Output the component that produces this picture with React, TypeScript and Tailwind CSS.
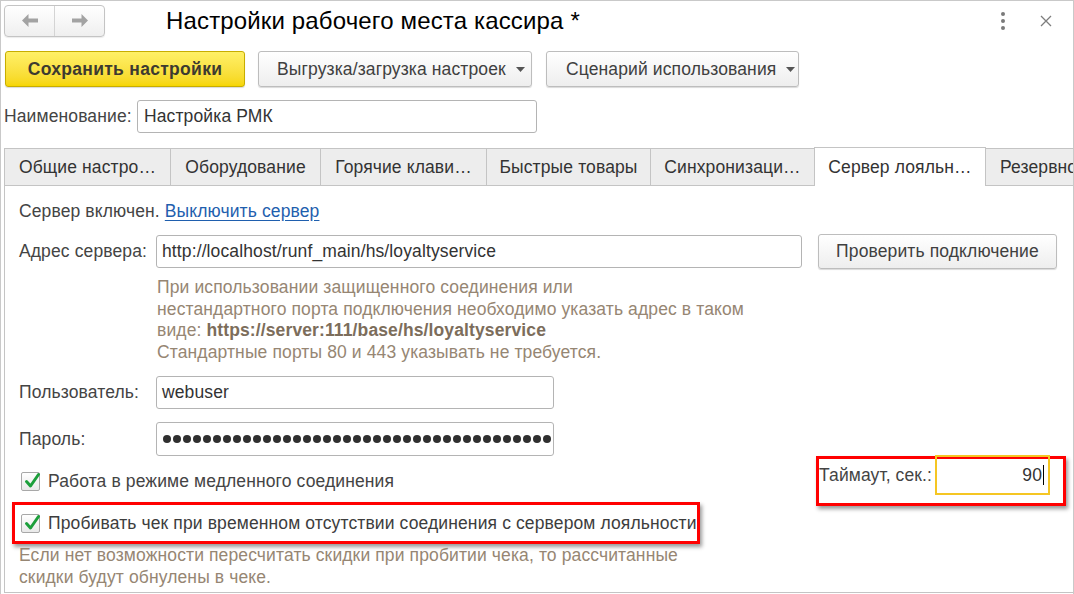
import React from 'react';

const tabs = [
  { label: 'Общие настро…', w: 'w-[167px]' },
  { label: 'Оборудование', w: 'w-[151px]' },
  { label: 'Горячие клави…', w: 'w-[167px]' },
  { label: 'Быстрые товары', w: 'w-[165px]' },
  { label: 'Синхронизаци…', w: 'w-[165px]' },
  { label: 'Сервер лояльн…', w: 'w-[172px]', active: true },
  { label: 'Резервное копирование', w: 'w-[140px]' },
];

const Caret = () => (
  <svg width="9" height="5" viewBox="0 0 9 5" className="shrink-0">
    <polygon points="0,0 9,0 4.5,5" fill="#555" />
  </svg>
);

const CheckBox = () => (
  <div className="relative w-[19px] h-[19px] shrink-0 rounded-[2px] border border-[#a8a8a8] bg-gradient-to-b from-white to-[#e9e9e9]">
    <svg className="absolute left-[1px] -top-[2px]" width="18" height="19" viewBox="0 0 18 19">
      <path d="M3.5 10.5 L7.5 15 L15.5 3.5" stroke="#1c9f3b" strokeWidth="3" fill="none" strokeLinecap="round" strokeLinejoin="round" />
    </svg>
  </div>
);

export default function App() {
  return (
    <div className="relative w-[1074px] h-[594px] overflow-hidden bg-white border-t border-l border-r border-[#c9c9c9] font-['Liberation_Sans',Arial,sans-serif] text-[17.5px] tracking-[0.12px] text-[#444]">
      {/* Header */}
      <div className="flex items-center h-[39px] pl-[3px]">
        <div className="flex w-[101px] h-[32px] rounded-[4px] border border-[#c4c4c4] bg-gradient-to-b from-white to-[#efefef] shadow-[0_1px_1px_rgba(0,0,0,0.08)]">
          <div className="flex-1 flex items-center justify-center border-r border-[#d4d4d4]">
            <svg width="16" height="13" viewBox="0 0 16 13">
              <polygon points="0,6.5 6.5,0 6.5,4.5 16,4.5 16,8.5 6.5,8.5 6.5,13" fill="#a3a3a3" />
            </svg>
          </div>
          <div className="flex-1 flex items-center justify-center">
            <svg width="16" height="13" viewBox="0 0 16 13">
              <polygon points="16,6.5 9.5,0 9.5,4.5 0,4.5 0,8.5 9.5,8.5 9.5,13" fill="#a3a3a3" />
            </svg>
          </div>
        </div>
        <div className="ml-[61px] text-[24px] tracking-[0.15px] text-black leading-none">Настройки рабочего места кассира *</div>
        <div className="ml-auto flex items-center mr-[21px]">
          <div className="flex flex-col gap-[3px]">
            <div className="w-[4px] h-[4px] rounded-full bg-[#7a7a7a]" />
            <div className="w-[4px] h-[4px] rounded-full bg-[#7a7a7a]" />
            <div className="w-[4px] h-[4px] rounded-full bg-[#7a7a7a]" />
          </div>
          <svg className="ml-[35px]" width="12" height="12" viewBox="0 0 12 12">
            <path d="M1 1 L11 11 M11 1 L1 11" stroke="#7d7d7d" strokeWidth="1.3" />
          </svg>
        </div>
      </div>

      {/* Command bar */}
      <div className="flex mt-[11px] pl-[4px] h-[36px]">
        <button className="w-[240px] h-full rounded-[3px] border border-[#c7ad00] bg-gradient-to-b from-[#fff066] to-[#f6d600] font-bold tracking-[0.3px] text-[#3d3a30] shadow-[0_1px_1px_rgba(0,0,0,0.15)]">
          Сохранить настройки
        </button>
        <button className="ml-[13px] w-[274px] h-full flex items-center gap-[10px] pl-[18px] rounded-[3px] border border-[#bdbdbd] bg-gradient-to-b from-white to-[#eeeeee] text-[#404040] shadow-[0_1px_1px_rgba(0,0,0,0.15)]">
          Выгрузка/загрузка настроек <Caret />
        </button>
        <button className="ml-[14px] w-[253px] h-full flex items-center gap-[10px] pl-[19px] rounded-[3px] border border-[#bdbdbd] bg-gradient-to-b from-white to-[#eeeeee] text-[#404040] shadow-[0_1px_1px_rgba(0,0,0,0.15)]">
          Сценарий использования <Caret />
        </button>
      </div>

      {/* Name */}
      <div className="flex items-center mt-[13px] pl-[3px] h-[33px]">
        <div className="w-[133px]">Наименование:</div>
        <div className="w-[400px] h-full flex items-center pl-[6px] rounded-[3px] border border-[#b4b4b4] text-[#333]">
          Настройка РМК
        </div>
      </div>

      {/* Tabs */}
      <div className="flex items-end mt-[14px] pl-[3px] h-[38px]">
        {tabs.map((t, i) =>
          t.active ? (
            <div
              key={t.label}
              className={`${t.w} relative z-10 -mb-px h-[39px] shrink-0 ${i ? '-ml-px' : ''} flex items-center justify-center border border-b-0 border-[#c4c4c4] bg-white text-[#333] whitespace-nowrap overflow-hidden`}
            >
              {t.label}
            </div>
          ) : (
            <div
              key={t.label}
              className={`${t.w} h-[37px] shrink-0 ${i ? '-ml-px' : ''} flex items-center ${i === tabs.length - 1 ? 'pl-[14px]' : 'justify-center'} border border-b-0 border-[#c4c4c4] bg-[#ededed] text-[#333] whitespace-nowrap overflow-hidden`}
            >
              {t.label}
            </div>
          )
        )}
      </div>

      {/* Panel */}
      <div className="ml-[3px] h-[408px] border-l border-t border-b border-[#c4c4c4] pl-[14px] pt-[14px]">
        <div className="h-[22px] flex items-center">
          Сервер включен.&nbsp;
          <span className="text-[#1f5fae] underline underline-offset-[3px]">Выключить сервер</span>
        </div>

        <div className="flex items-center mt-[13px] h-[33px]">
          <div className="w-[137px]">Адрес сервера:</div>
          <div className="w-[646px] h-full flex items-center pl-[5px] rounded-[3px] border border-[#b4b4b4] text-[#333]">
            http://localhost/runf_main/hs/loyaltyservice
          </div>
          <button className="ml-[16px] w-[239px] h-[35px] rounded-[3px] border border-[#bdbdbd] bg-gradient-to-b from-white to-[#eeeeee] text-[#404040] shadow-[0_1px_1px_rgba(0,0,0,0.15)]">
            Проверить подключение
          </button>
        </div>

        <div className="mt-[9px] ml-[138px] leading-[21.5px] text-[#968673]">
          <div>При использовании защищенного соединения или</div>
          <div>нестандартного порта подключения необходимо указать адрес в таком</div>
          <div>
            виде: <span className="font-bold text-[#7c6d5b]">https://server:111/base/hs/loyaltyservice</span>
          </div>
          <div>Стандартные порты 80 и 443 указывать не требуется.</div>
        </div>

        <div className="flex items-center mt-[13px] h-[33px]">
          <div className="w-[137px]">Пользователь:</div>
          <div className="w-[398px] h-full flex items-center pl-[5px] rounded-[3px] border border-[#b4b4b4] text-[#333]">
            webuser
          </div>
        </div>

        <div className="flex items-center mt-[13px] h-[34px]">
          <div className="w-[137px]">Пароль:</div>
          <div className="w-[398px] h-full flex items-center gap-[2px] pl-[6px] overflow-hidden rounded-[3px] border border-[#b4b4b4]">
            {Array.from({ length: 40 }).map((_, i) => (
              <div key={i} className="w-[8px] h-[8px] shrink-0 rounded-full bg-[#2f2f2f]" />
            ))}
          </div>
        </div>

        <div className="flex items-center mt-[11px] h-[28px]">
          <div className="flex items-center pl-[2px]">
            <CheckBox />
            <span className="ml-[8px]">Работа в режиме медленного соединения</span>
          </div>
          <div className="ml-auto mr-[7px] w-[250px] h-[50px] shrink-0 border-[3px] border-[#ff0000] shadow-[2px_3px_4px_rgba(0,0,0,0.4)]">
            <div className="flex items-center -mt-[4px] h-[40px]">
              <div className="w-[116px] whitespace-nowrap">Таймаут, сек.:</div>
              <div className="w-[115px] h-full flex items-center justify-end pr-[4px] border-2 border-[#f5c623] text-[#333]">
                90<span className="ml-[1px] w-px h-[20px] bg-black" />
              </div>
            </div>
          </div>
        </div>

        <div className="mt-[7px] -ml-[7px] w-[688px] h-[42px] flex items-center pl-[6px] border-[3px] border-[#ff0000] shadow-[2px_3px_4px_rgba(0,0,0,0.4)]">
          <CheckBox />
          <span className="ml-[8px] whitespace-nowrap text-[#3d3d3d]">
            Пробивать чек при временном отсутствии соединения с сервером лояльности
          </span>
        </div>

        <div className="leading-[22px] text-[#968673]">
          <div>Если нет возможности пересчитать скидки при пробитии чека, то рассчитанные</div>
          <div>скидки будут обнулены в чеке.</div>
        </div>
      </div>
    </div>
  );
}
